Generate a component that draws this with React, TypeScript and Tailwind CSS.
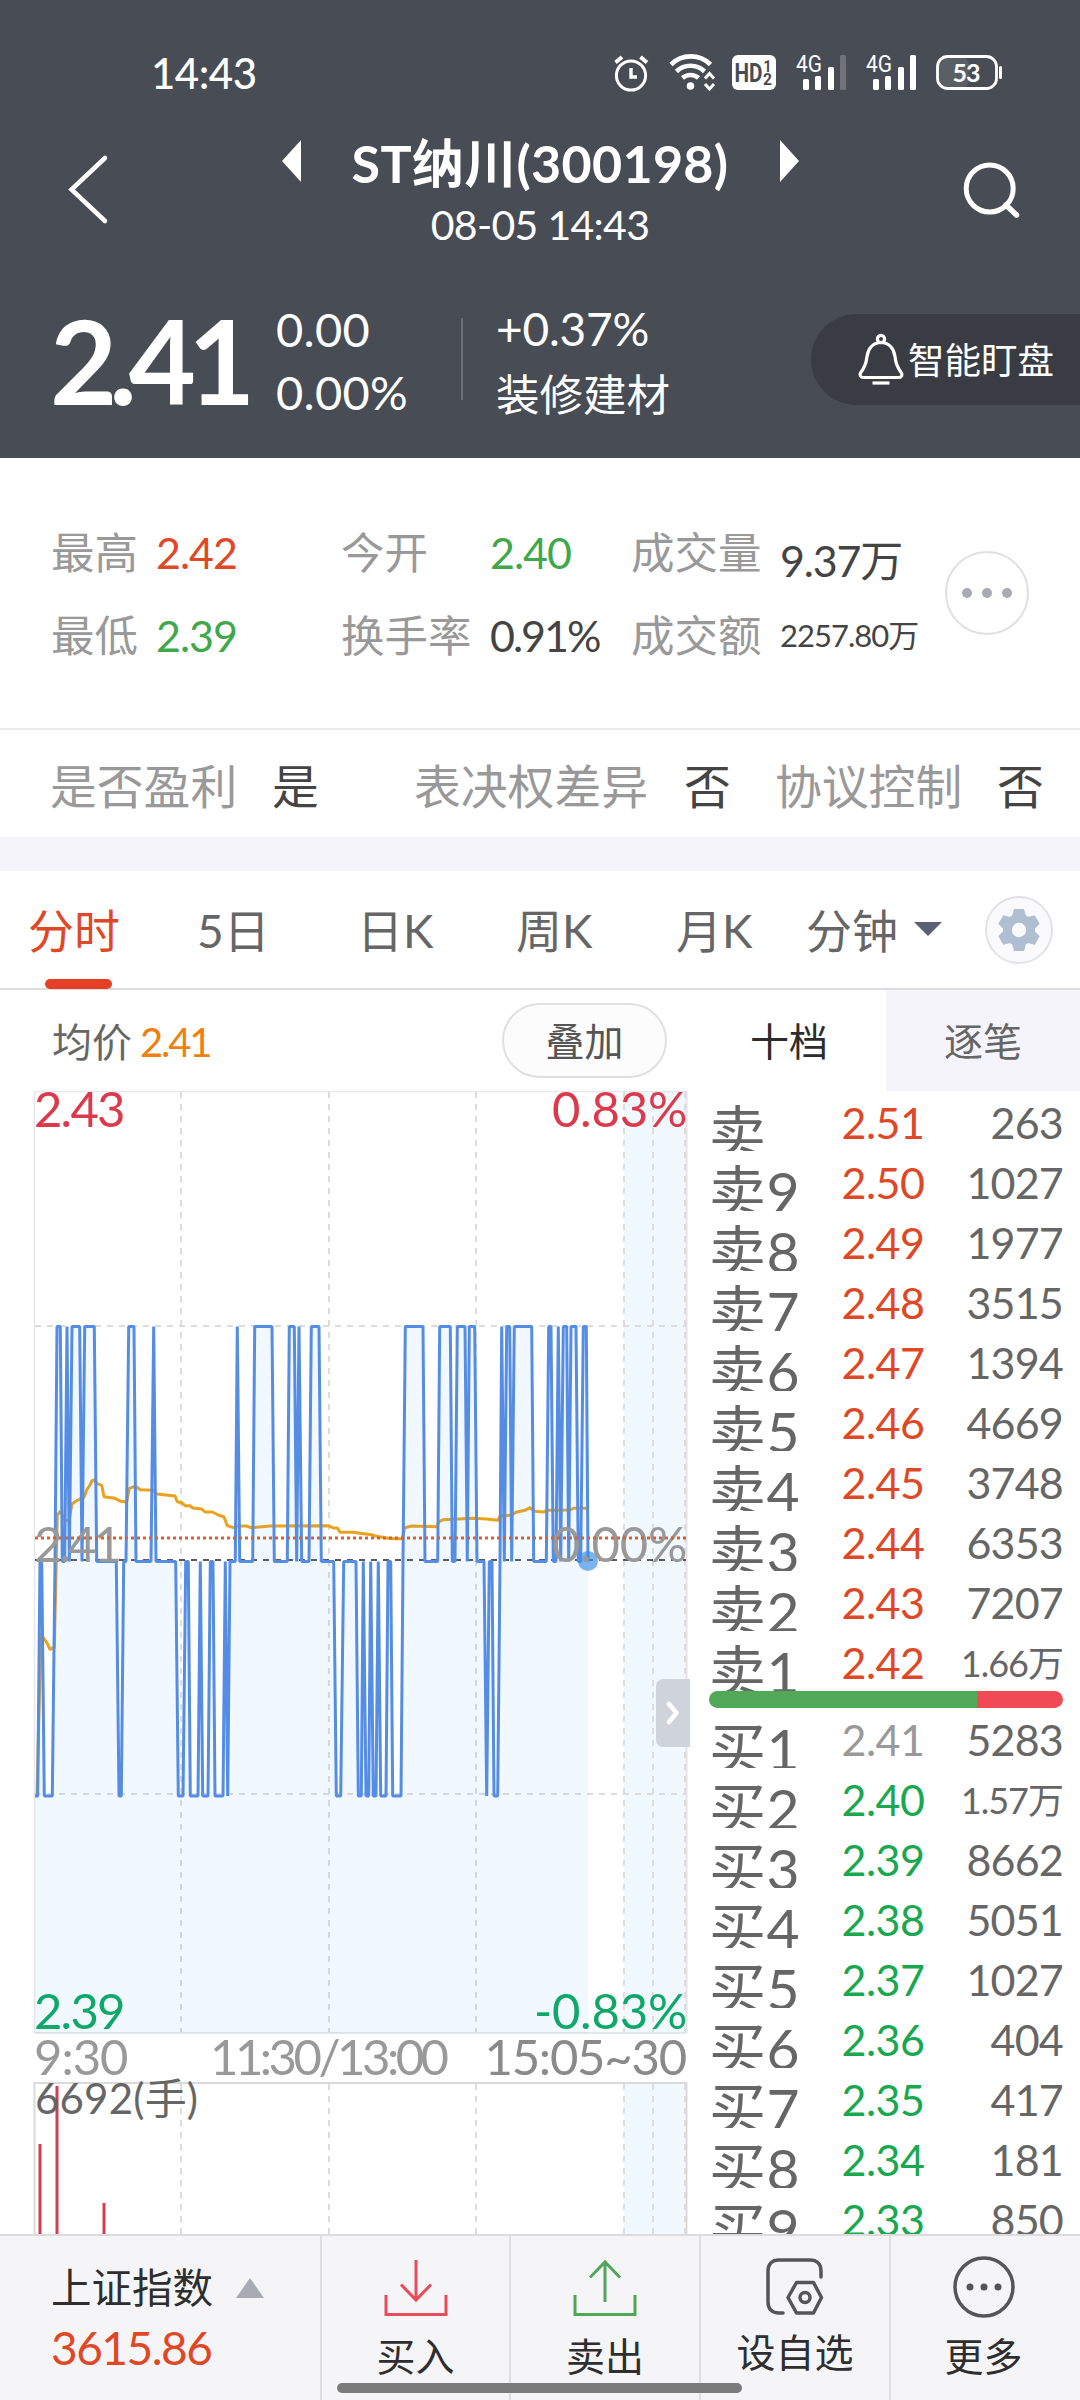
import React from "react";

type Level = "H" | "M" | "L";
type Run = [Level, number, number?];

const LEVEL_Y: Record<Level, number> = { H: 1326.5, M: 1561.5, L: 1796 };

// Price steps of the session, in thirds of a pixel from the left edge of the screen.
const PRICE_RUNS: Run[] = [
  ["L", 105, 113], ["M", 120, 125], ["L", 133, 157], ["M", 165], ["H", 171, 181], ["M", 187, 194],
  ["H", 201], ["M", 208], ["H", 216, 239], ["M", 246], ["H", 254, 283], ["M", 290, 349],
  ["L", 357, 364], ["M", 371, 378], ["H", 386, 402], ["M", 408, 453], ["H", 461], ["M", 468, 527],
  ["L", 535, 549], ["M", 557, 565], ["L", 571, 594], ["M", 601], ["L", 608, 624], ["M", 631, 639],
  ["L", 645, 669], ["M", 676], ["L", 683], ["M", 690, 706], ["H", 712], ["M", 719, 758],
  ["H", 764, 816], ["M", 823, 862], ["H", 868, 883], ["M", 890], ["H", 897], ["M", 905, 927],
  ["H", 934, 957], ["M", 964, 1001], ["L", 1009, 1022], ["M", 1031, 1068], ["L", 1075, 1084],
  ["M", 1090], ["L", 1098, 1106], ["M", 1112], ["L", 1120, 1128], ["M", 1135], ["L", 1142, 1158],
  ["M", 1164, 1172], ["L", 1178, 1203], ["M", 1209], ["H", 1216, 1269], ["M", 1275, 1313],
  ["H", 1319, 1351], ["M", 1357, 1365], ["H", 1372, 1395], ["M", 1402], ["H", 1408, 1424],
  ["M", 1431, 1452], ["L", 1460], ["M", 1468, 1476], ["L", 1482, 1493], ["M", 1500], ["H", 1505],
  ["M", 1513], ["H", 1520, 1529], ["M", 1535], ["H", 1543, 1595], ["M", 1601, 1639],
  ["H", 1646, 1653], ["M", 1660, 1668], ["H", 1675], ["M", 1682], ["H", 1690, 1700], ["M", 1706],
  ["H", 1713, 1728], ["M", 1735, 1742], ["H", 1750, 1759], ["M", 1764],
];

const pricePoints = PRICE_RUNS.flatMap(([level, from, to]) => {
  const y = LEVEL_Y[level];
  const first = `${(from / 3).toFixed(1)},${y}`;
  return to === undefined ? [first] : [first, `${(to / 3).toFixed(1)},${y}`];
}).join(" ");

const AVERAGE: [number, number][] = [
  [111, 1488], [118, 1200], [124, 1003], [135, 1020], [142, 1030], [150, 1048], [163, 1042], [172, 645],
  [180, 635], [188, 645], [195, 662], [207, 660], [216, 612], [225, 605], [240, 597], [252, 592],
  [260, 570], [270, 555], [276, 542], [283, 540], [290, 550], [305, 556], [312, 590], [345, 595],
  [362, 604], [380, 606], [388, 565], [402, 560], [412, 562], [420, 569], [460, 571], [470, 582],
  [525, 588], [532, 605], [545, 608], [555, 617], [570, 617], [578, 624], [605, 627], [615, 636],
  [637, 636], [655, 645], [672, 651], [682, 677], [700, 683], [708, 678], [740, 678], [752, 683],
  [810, 678], [985, 677], [1000, 684], [1012, 684], [1020, 697], [1060, 697], [1080, 700],
  [1115, 704], [1125, 708], [1155, 713], [1180, 716], [1207, 716], [1214, 683], [1235, 678],
  [1310, 680], [1317, 665], [1330, 659], [1420, 655], [1460, 657], [1493, 661], [1500, 649],
  [1535, 645], [1548, 637], [1575, 631], [1590, 623], [1603, 634], [1632, 636], [1640, 631],
  [1710, 630], [1720, 625], [1762, 625],
];
const averagePoints = AVERAGE.map(([x, y]) => `${(x / 3).toFixed(1)},${(1300 + y / 3).toFixed(1)}`).join(" ");

const GRID_X = [181, 329, 476, 624, 653, 685];

const ASKS: [string, string, string][] = [
  ["卖", "2.51", "263"],
  ["卖9", "2.50", "1027"],
  ["卖8", "2.49", "1977"],
  ["卖7", "2.48", "3515"],
  ["卖6", "2.47", "1394"],
  ["卖5", "2.46", "4669"],
  ["卖4", "2.45", "3748"],
  ["卖3", "2.44", "6353"],
  ["卖2", "2.43", "7207"],
  ["卖1", "2.42", "1.66万"],
];
const BIDS: [string, string, string][] = [
  ["买1", "2.41", "5283"],
  ["买2", "2.40", "1.57万"],
  ["买3", "2.39", "8662"],
  ["买4", "2.38", "5051"],
  ["买5", "2.37", "1027"],
  ["买6", "2.36", "404"],
  ["买7", "2.35", "417"],
  ["买8", "2.34", "181"],
  ["买9", "2.33", "850"],
];

function StatusIcons() {
  return (
    <svg width="400" height="46" viewBox="612 50 400 46" fill="none" className="block">
      <g stroke="#fff" strokeWidth="3">
        <circle cx="631" cy="75.5" r="14.6" />
        <path d="M631 68v9h6" strokeWidth="3.4" />
        <path d="M615.5 62.5l6.5-5.5M640.5 57l6.5 5.5" strokeWidth="4" />
      </g>
      <g stroke="#fff" strokeWidth="4.6">
        <path d="M671 64.500a28 28 0 0 1 39.500 0" />
        <path d="M676.500 71.500a20 20 0 0 1 28 0" />
        <path d="M682.500 78a12 12 0 0 1 16 0" />
      </g>
      <circle cx="690.500" cy="86" r="3.8" fill="#fff" />
      <path d="M705 78.500l4.500-5 4.500 5M705 84l4.500 5 4.500-5" stroke="#fff" strokeWidth="3" />
      <rect x="732" y="55" width="44" height="35" rx="6" fill="#fff" />
      <g fill="#484c55" fontFamily="Roboto" fontWeight="700">
        <text x="734.500" y="81.500" fontSize="25" textLength="28" lengthAdjust="spacingAndGlyphs">HD</text>
        <text x="763.500" y="72" fontSize="17" textLength="8" lengthAdjust="spacingAndGlyphs">1</text>
        <text x="763" y="84.500" fontSize="17" textLength="9" lengthAdjust="spacingAndGlyphs">2</text>
      </g>
      {[0, 70].map((dx) => (
        <g key={dx} transform={`translate(${dx} 0)`} fill="#fff">
          <text x="796" y="72" fontSize="23" fontFamily="Roboto" textLength="26" lengthAdjust="spacingAndGlyphs">4G</text>
          <rect x="803" y="79" width="6" height="11" rx="1.500" />
          <rect x="815" y="76" width="6" height="14" rx="1.500" />
          <rect x="828" y="67" width="6" height="23" rx="1.500" />
          <rect x="840" y="55" width="6" height="35" rx="1.500" opacity={dx === 0 ? 0.22 : 1} />
        </g>
      ))}
      <rect x="938" y="57" width="31" height="31" rx="8" fill="#5a5f66" />
      <rect x="937.500" y="56.500" width="59" height="32" rx="10" stroke="#fff" strokeWidth="2.8" />
      <rect x="999" y="66" width="3" height="13" rx="1.500" fill="#fff" />
      <text x="952.500" y="81.500" fontSize="25" fontFamily="Lato" fontWeight="700" fill="#fff" textLength="28">53</text>
    </svg>
  );
}

function Header() {
  return (
    <header className="h-[458px] overflow-hidden bg-[#484c55] text-white">
      <div className="flex h-[50px]" />
      <div className="flex h-[46px] items-center justify-between pl-[151px] pr-[68px]">
        <span className="text-[42px] leading-[46px] font-medium tracking-[-0.5px]">14:43</span>
        <StatusIcons />
      </div>
      <div className="flex h-[190px] justify-between pl-[66px] pr-[58px] pt-[33px]">
        <svg width="44" height="74" viewBox="66 153 44 74" fill="none" className="mt-[23px]">
          <path d="M105 159L71.500 190.500L105 222" stroke="#fff" strokeWidth="4.500" strokeLinecap="round" />
        </svg>
        <div className="ml-[8px] flex flex-col items-center">
          <div className="flex h-[68px] items-center">
            <svg width="19" height="42" viewBox="0 0 19 42" className="-mt-[4px]"><path d="M19 0v42L0 21z" fill="#fff" /></svg>
            <h1 className="w-[479px] text-center text-[52px] leading-[68px] font-bold tracking-[0.3px]">ST纳川(300198)</h1>
            <svg width="19" height="42" viewBox="0 0 19 42" className="-mt-[4px]"><path d="M0 0v42L19 21z" fill="#fff" /></svg>
          </div>
          <p className="h-[56px] text-[41px] leading-[56px] tracking-[-0.700px]">08-05 14:43</p>
        </div>
        <svg width="60" height="60" viewBox="962 160 60 60" fill="none" className="mt-[31px]">
          <circle cx="989.700" cy="188.500" r="23.500" stroke="#fff" strokeWidth="5" />
          <path d="M1006 205l10.500 10" stroke="#fff" strokeWidth="5.500" strokeLinecap="round" />
        </svg>
      </div>
      <div className="flex pt-[11px] pl-[50px]">
        <div className="-mt-[3px] w-[226px] text-[116px] leading-[134px] font-bold tracking-[-8px]">2.41</div>
        <div className="w-[185px] text-[47px] leading-[64px] tracking-[0.300px]">
          <div>0.00</div>
          <div className="-mt-[1px]">0.00%</div>
        </div>
        <div className="mt-[21px] h-[82px] w-[2px] bg-[#6a6e76]" />
        <div className="ml-[33px] w-[315px]">
          <div className="text-[46px] leading-[64px] tracking-[-0.200px]">+0.37%</div>
          <div className="text-[43.500px] leading-[66px]">装修建材</div>
        </div>
        <div className="mt-[17px] flex h-[91px] flex-1 items-center rounded-l-full bg-[#3a3c43] pl-[46px]">
          <svg width="48" height="54" viewBox="0 0 48 54" fill="none" stroke="#fff" strokeWidth="3.200" strokeLinejoin="round">
            <circle cx="24" cy="6" r="3.600" />
            <path d="M24 9.500c-8 0-13 6-14 14-.7 7-3 12-6.500 16.500-1.400 2 .2 4.500 2.500 4.500h36c2.300 0 3.900-2.500 2.500-4.500C41 35.500 38.700 30.500 38 23.500c-1-8-6-14-14-14z" />
            <path d="M15.500 50h17" />
          </svg>
          <span className="ml-[3px] text-[36.500px] leading-[60px] whitespace-nowrap">智能盯盘</span>
        </div>
      </div>
    </header>
  );
}

function Stats() {
  return (
    <section className="h-[379px] bg-white">
      <div className="flex h-[270px] pt-[53px] pl-[51px] text-[43.500px] leading-[83px] text-[#999]">
        <div className="grid h-[166px] w-[894px] grid-cols-[105px_185px_149px_141px_149px_1fr] grid-rows-2 whitespace-nowrap">
          <span>最高</span>
          <span className="text-[43px] tracking-[-1px] text-[#df4826]">2.42</span>
          <span>今开</span>
          <span className="text-[43px] tracking-[-1px] text-[#3fa84a]">2.40</span>
          <span>成交量</span>
          <span className="relative top-[8px] text-[43px] tracking-[-1.200px] text-[#444]">9.37万</span>
          <span>最低</span>
          <span className="text-[43px] tracking-[-1px] text-[#3fa84a]">2.39</span>
          <span>换手率</span>
          <span className="text-[43px] tracking-[-2px] text-[#444]">0.91%</span>
          <span>成交额</span>
          <span className="text-[31px] tracking-[-1px] text-[#444]">2257.80万</span>
        </div>
        <div className="mt-[40px] flex size-[84px] items-center justify-center gap-[10px] rounded-full border-2 border-[#e0e0e2]">
          <i className="size-[10px] rounded-full bg-[#a9abb3]" />
          <i className="size-[10px] rounded-full bg-[#a9abb3]" />
          <i className="size-[10px] rounded-full bg-[#a9abb3]" />
        </div>
      </div>
      <div className="flex h-[109px] border-t-2 border-[#ececee] pl-[50px] text-[46.800px] leading-[113px] whitespace-nowrap text-[#999]">
        <span className="w-[222px]">是否盈利</span>
        <span className="w-[142px] text-[#444]">是</span>
        <span className="w-[270px]">表决权差异</span>
        <span className="w-[91px] text-[#444]">否</span>
        <span className="w-[222px]">协议控制</span>
        <span className="text-[#444]">否</span>
      </div>
    </section>
  );
}

function PeriodTabs() {
  return (
    <nav className="flex h-[119px] border-b-2 border-[#dddddd] bg-white pl-[28px] text-[46px] leading-[120px] whitespace-nowrap text-[#666]">
      <div className="relative w-[169px] text-[#df4826]">
        分时
        <i className="absolute top-[108px] left-[17px] h-[10px] w-[67px] rounded-[5px] bg-[#e54024]" />
      </div>
      <span className="w-[160px]">5日</span>
      <span className="w-[159px]">日K</span>
      <span className="w-[160px]">周K</span>
      <span className="w-[130px]">月K</span>
      <span className="w-[107px]">分钟</span>
      <svg width="30" height="16" viewBox="0 0 30 16" className="mt-[50px]"><path d="M1 1h28L15 15z" fill="#5b6072" /></svg>
      <div className="mt-[25px] ml-[42px] flex size-[68px] items-center justify-center rounded-full border-2 border-[#e2e2e6] bg-[#fafafc]">
        <svg width="44" height="44" viewBox="-22 -22 44 44">
          <g fill="#afbfd1">
            <circle r="16" />
            {[0, 60, 120, 180, 240, 300].map((a) => (
              <path key={a} d="M-7.500-12L-5-21H5L7.500-12z" transform={`rotate(${a})`} />
            ))}
          </g>
          <circle r="7.200" fill="#fafafc" />
        </svg>
      </div>
    </nav>
  );
}

function Chart() {
  return (
    <div className="relative h-[1143px] w-[692px]">
      <svg width="692" height="1143" viewBox="0 1091 692 1143" fill="none" className="block">
        <rect x="624" y="1092" width="62" height="941" fill="#f1f8fe" />
        <rect x="624" y="2084" width="62" height="150" fill="#f1f8fe" />
        <path d="M34.500 2033V1091.500H686" stroke="#e6e7ea" strokeWidth="1.500" />
        <path d="M34 2033H686" stroke="#e4e7ea" strokeWidth="2" />
        <path d="M686.500 1091V2033" stroke="#e4e4e6" strokeWidth="2" />
        <g stroke="#dcdcdc" strokeWidth="2" strokeDasharray="6 6">
          <path d="M35 1326H686M35 1794H686" />
          {GRID_X.map((x) => (
            <path key={x} d={`M${x} 1092V2032M${x} 2084V2234`} />
          ))}
        </g>
        <path d="M35 1560H686" stroke="#5a5a5a" strokeWidth="2" strokeDasharray="6 6" />
        <polyline points={averagePoints} stroke="#eaa21c" strokeWidth="3" strokeLinejoin="round" />
        <polygon points={`35,2033 35,1796 ${pricePoints} 588,2033`} fill="#3c96fa" fillOpacity="0.07" />
        <polyline points={pricePoints} stroke="#568de4" strokeWidth="3" strokeLinejoin="bevel" />
        <circle cx="588" cy="1561" r="10" fill="#3d8fe8" fillOpacity="0.68" />
        <path d="M34.500 2234V2083H686.500V2234" stroke="#dadada" strokeWidth="2" />
        <path d="M40 2144V2234M57 2086V2234M104 2203V2234" stroke="#d13f52" strokeWidth="3" />
      </svg>
      <div className="absolute inset-0 text-[49px] leading-[60px] tracking-[-0.200px]">
        <span className="absolute top-[-13px] left-[34px] tracking-[-1.800px] text-[#dc3a4c]">2.43</span>
        <span className="absolute top-[-13px] right-[5px] text-[#dc3a4c]">0.83%</span>
        <span className="absolute top-[422px] left-[34px] tracking-[-3px] text-[#999]">2.41</span>
        <span className="absolute top-[422px] right-[5px] text-[#999]">0.00%</span>
        <span className="absolute top-[889px] left-[34px] tracking-[-1.800px] text-[#0fa868]">2.39</span>
        <span className="absolute top-[889px] right-[5px] text-[#0fa868]">-0.83%</span>
        <span className="absolute top-[935px] left-[34px] tracking-[-1px] text-[#999]">9:30</span>
        <span className="absolute top-[935px] left-[210px] tracking-[-3.500px] text-[#999]">11:30/13:00</span>
        <span className="absolute top-[935px] right-[6px] tracking-[-1.200px] text-[#8a8a8a]">15:05~30</span>
        <span className="absolute top-[977px] left-[35px] text-[42px] tracking-[0.200px] text-[#666]">6692(手)</span>
      </div>
      <svg width="692" height="60" viewBox="0 1510 692 60" fill="none" className="absolute top-[419px] left-0">
        <path d="M35 1538H688" stroke="#db6030" strokeWidth="3" strokeDasharray="3 3" />
      </svg>
      <div className="absolute top-[588px] left-[656px] flex h-[68px] w-[34px] items-center justify-center rounded-l-[7px] bg-[#cfd3da]">
        <svg width="14" height="26" viewBox="0 0 14 26" fill="none"><path d="M3 4l7.500 9L3 22" stroke="#fff" strokeWidth="4.500" strokeLinecap="round" strokeLinejoin="round" /></svg>
      </div>
    </div>
  );
}

function BookRow({ row, price }: { row: [string, string, string]; price: string }) {
  const big = row[2].endsWith("万");
  return (
    <div className="flex h-[60px] shrink-0 pl-[17px] text-[#666]">
      <div className="h-[57px] w-[112px] overflow-hidden text-[57px] leading-[74px] tracking-[0.500px] whitespace-nowrap">{row[0]}</div>
      <div className={`w-[124px] text-center text-[43px] leading-[58px] tracking-[-0.500px] ${price}`}>{row[1]}</div>
      <div className={`flex-1 pr-[17px] text-right leading-[58px] whitespace-nowrap ${big ? "text-[36px] tracking-[-1px]" : "text-[43px] tracking-[-0.800px]"}`}>
        {row[2]}
      </div>
    </div>
  );
}

function Board() {
  return (
    <section className="flex h-[1244px] overflow-hidden bg-white">
      <div className="w-[692px]">
        <div className="flex h-[101px] justify-between pt-[12px] pr-[25px] pl-[52px]">
          <div className="text-[40px] leading-[80px] text-[#666]">
            均价<span className="ml-[8px] tracking-[-2.200px] text-[#ee8010]">2.41</span>
          </div>
          <div className="mt-[1px] h-[75px] w-[165px] rounded-full border-2 border-[#e0e0e0] bg-[#fcfcfc] text-center text-[39px] leading-[73px] text-[#555]">
            叠加
          </div>
        </div>
        <Chart />
      </div>
      <div className="flex w-[388px] flex-col">
        <div className="flex h-[101px] shrink-0 text-center text-[39px] leading-[102px]">
          <div className="w-[194px] text-[#2c2c2c]">十档</div>
          <div className="flex-1 bg-[#f4f4fa] text-[#666]">逐笔</div>
        </div>
        <div className="flex h-[600px] shrink-0 flex-col pt-[3px]">
          {ASKS.map((r) => (
            <BookRow key={r[0]} row={r} price="text-[#df4826]" />
          ))}
        </div>
        <div className="z-10 mr-[17px] ml-[17px] flex h-[17px] shrink-0 overflow-hidden rounded-full">
          <div className="w-[268px] bg-[#4fa956]" />
          <div className="flex-1 bg-[#f14a56]" />
        </div>
        <div className="flex h-[526px] shrink-0 flex-col overflow-hidden pt-[3px]">
          {BIDS.map((r, i) => (
            <BookRow key={r[0]} row={r} price={i === 0 ? "text-[#999]" : "text-[#18a84f]"} />
          ))}
        </div>
      </div>
    </section>
  );
}

function BottomBar() {
  return (
    <footer className="relative flex h-[167px] border-t-2 border-[#dcdcde] bg-[#f5f5f8] text-[39px] whitespace-nowrap text-[#2e2e2e]">
      <div className="w-[320px] pt-[20px] pl-[51px]">
        <div className="flex items-center text-[40.500px] leading-[64px]">
          上证指数
          <svg width="28" height="20" viewBox="0 0 28 20" className="ml-[23px]"><path d="M14 0l14 20H0z" fill="#a8abb2" /></svg>
        </div>
        <div className="text-[46px] leading-[56px] tracking-[-1.500px] text-[#df4826]">3615.86</div>
      </div>
      <div className="flex w-[189px] flex-col items-center border-l-2 border-[#dedee0] pt-[22px]">
        <svg width="64" height="60" viewBox="0 0 64 60" fill="none" stroke="#e84c5c" strokeWidth="3">
          <path d="M2 37v19.500h60V37" /><path d="M32 2v40M17 26.500l15 15.500 15-15.500" />
        </svg>
        <span className="mt-[10px] leading-[56px]">买入</span>
      </div>
      <div className="flex w-[190px] flex-col items-center border-l-2 border-[#dedee0] pt-[22px]">
        <svg width="64" height="60" viewBox="0 0 64 60" fill="none" stroke="#50a65a" strokeWidth="3">
          <path d="M2 37v19.500h60V37" /><path d="M32 44V3M17 19.500L32 4l15 15.500" />
        </svg>
        <span className="mt-[10px] leading-[56px]">卖出</span>
      </div>
      <div className="flex w-[190px] flex-col items-center border-l-2 border-[#dedee0] pt-[22px]">
        <svg width="58" height="60" viewBox="0 0 58 60" fill="none" stroke="#555" strokeWidth="3.500" strokeLinecap="round" strokeLinejoin="round">
          <path d="M17 55h-4C6 55 2 51 2 44V13C2 6 6 2 13 2h31c7 0 11 4 11 11v6" />
          <path d="M30.500 24.500h17l8 15-8 15.500h-17l-8.500-15.500z" />
          <circle cx="39" cy="39.500" r="5" />
        </svg>
        <span className="mt-[6px] leading-[56px]">设自选</span>
      </div>
      <div className="flex flex-1 flex-col items-center border-l-2 border-[#dedee0] pt-[19px] pr-[4px]">
        <svg width="64" height="64" viewBox="0 0 64 64" fill="none">
          <circle cx="32" cy="32" r="29" stroke="#555" strokeWidth="3.500" />
          <g fill="#555"><circle cx="18" cy="32" r="3.500" /><circle cx="32" cy="32" r="3.500" /><circle cx="46" cy="32" r="3.500" /></g>
        </svg>
        <span className="mt-[9px] leading-[56px]">更多</span>
      </div>
      <i className="absolute top-[147px] left-[337px] h-[10px] w-[405px] rounded-full bg-[#7b7b7b]" />
    </footer>
  );
}

export default function App() {
  return (
    <main className="h-[2400px] w-[1080px] overflow-hidden bg-white font-[Lato,'Noto_Sans_CJK_SC',sans-serif]">
      <Header />
      <Stats />
      <div className="h-[34px] bg-[#f4f4fa]" />
      <PeriodTabs />
      <Board />
      <BottomBar />
    </main>
  );
}
